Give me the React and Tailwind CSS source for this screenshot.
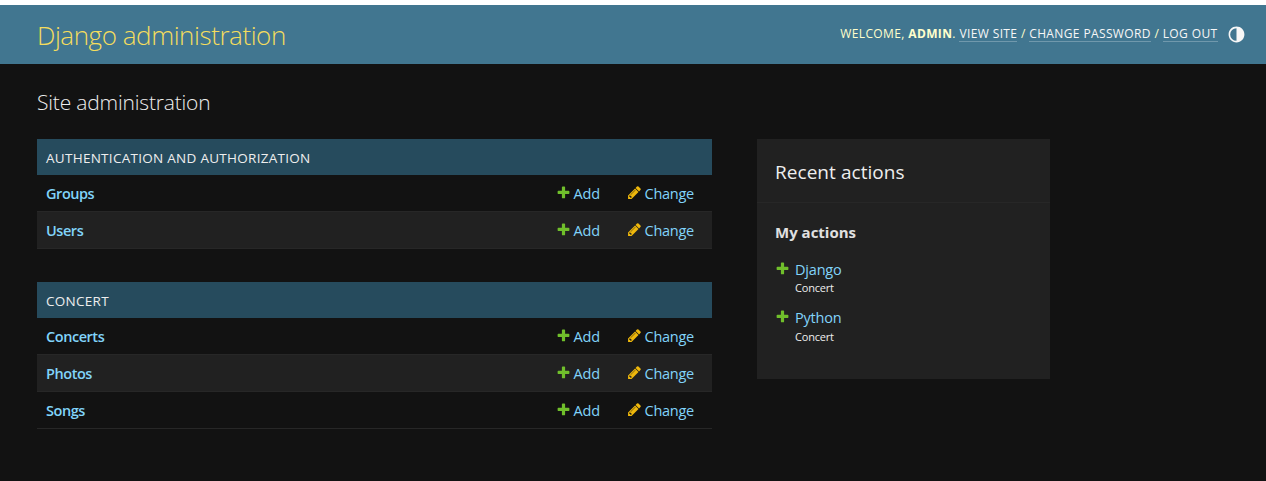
import React from "react";

function PlusIcon({ className }) {
  return (
    <svg viewBox="0 0 1792 1792" className={className} fill="#70bf2b">
      <path d="M1600 796v192q0 40-28 68t-68 28h-416v416q0 40-28 68t-68 28h-192q-40 0-68-28t-28-68v-416h-416q-40 0-68-28t-28-68v-192q0-40 28-68t68-28h416v-416q0-40 28-68t68-28h192q40 0 68 28t28 68v416h416q40 0 68 28t28 68z" />
    </svg>
  );
}

function PencilIcon({ className }) {
  return (
    <svg viewBox="0 0 1792 1792" className={className} fill="#efb80b">
      <path d="M491 1536l91-91-235-235-91 91v107h128v128h107zm523-928q0-22-22-22-10 0-17 7l-542 542q-7 7-7 17 0 22 22 22 10 0 17-7l542-542q7-7 7-17zm-54-192l416 416-832 832h-416v-416zm683 96q0 53-37 90l-166 166-416-416 166-165q36-38 90-38 53 0 91 38l235 234q37 39 37 91z" />
    </svg>
  );
}

function ThemeIcon({ className }) {
  return (
    <svg viewBox="0 0 24 24" className={className} fill="#f7f7f7">
      <path d="M12 22C6.477 22 2 17.523 2 12S6.477 2 12 2s10 4.477 10 10-4.477 10-10 10zm0-2V4a8 8 0 1 0 0 16z" />
    </svg>
  );
}

const userLink = "border-b border-white/25 text-[#f7f7f7] leading-[15px]";

function Header() {
  return (
    <header className="flex h-[59px] items-center justify-between bg-[#417690] pl-[37px] pr-[20.5px]">
      <h1 className="text-[26px] font-light leading-[32px] tracking-[-0.44px] text-[#f5dd5d]">
        Django administration
      </h1>
      <div className="mb-px flex items-center">
        <div className="flex items-baseline text-[12px] uppercase leading-[15px] tracking-[0.38px] text-[#ffffcc]">
          <span className="whitespace-pre">
            Welcome, <strong className="font-bold">admin</strong>.{" "}
          </span>
          <a className={userLink}>View site</a>
          <span className="whitespace-pre"> / </span>
          <a className={userLink}>Change password</a>
          <span className="whitespace-pre"> / </span>
          <a className={userLink}>Log out</a>
        </div>
        <ThemeIcon className="ml-[9px] size-[19px]" />
      </div>
    </header>
  );
}

function ModelRow({ name, striped }) {
  return (
    <div
      className={
        "flex h-[37px] items-center border-b border-[#272727] pl-[9px] text-[14.5px] leading-[20px] text-[#81d4fa] " +
        (striped ? "bg-[#212121]" : "bg-[#121212]")
      }
    >
      <a className="flex-1 pt-[2px] font-semibold tracking-[-0.45px]">{name}</a>
      <a className="flex w-[71px] items-center tracking-[-0.1px]">
        <PlusIcon className="mr-[2.5px] mb-px size-[15px]" />
        <span className="pt-[2px]">Add</span>
      </a>
      <a className="flex w-[85px] items-center tracking-[-0.25px]">
        <PencilIcon className="mr-[2.5px] mb-px size-[15px]" />
        <span className="pt-[2px]">Change</span>
      </a>
    </div>
  );
}

function Module({ title, models }) {
  return (
    <section>
      <h2 className="flex h-9 items-center bg-[#264b5d] pl-[9px] pt-[2px] text-[13.5px] uppercase tracking-[0.28px] text-[#eeeeee]">
        {title}
      </h2>
      {models.map((name, i) => (
        <ModelRow key={name} name={name} striped={i % 2 === 1} />
      ))}
    </section>
  );
}

function RecentAction({ name }) {
  return (
    <li className="flex h-[48.4px]">
      <PlusIcon className="mt-px mr-[5px] size-[15px]" />
      <div>
        <a className="block text-[14.5px] leading-[20.3px] tracking-[-0.2px] text-[#81d4fa]">{name}</a>
        <span className="block text-[11px] leading-[16px] tracking-[-0.2px] text-[#eeeeee]">Concert</span>
      </div>
    </li>
  );
}

function RecentActions() {
  return (
    <aside className="h-[240px] w-[293px] bg-[#212121] text-[#eeeeee]">
      <h2 className="h-16 border-b border-[#272727] px-[18px] pt-[20px] text-[19px] leading-[26px] tracking-[0.05px]">
        Recent actions
      </h2>
      <h3 className="px-[18px] pt-[18px] text-[15px] font-bold leading-[22px] text-[#e0e0e0]">My actions</h3>
      <ul className="px-[18px] pt-[17px]">
        <RecentAction name="Django" />
        <RecentAction name="Python" />
      </ul>
    </aside>
  );
}

export default function App() {
  return (
    <div className="h-[481px] overflow-hidden bg-[#121212] font-['Open_Sans','Noto_Sans',sans-serif]">
      <div className="h-[5px] bg-white" />
      <Header />
      <main className="px-[37px] pt-[24px]">
        <h1 className="text-[21px] font-light leading-[28px] tracking-[-0.18px] text-[#eeeeee]">Site administration</h1>
        <div className="mt-[23px] flex items-start gap-[45px]">
          <div className="flex w-[675px] flex-col gap-[33px]">
            <Module title="Authentication and Authorization" models={["Groups", "Users"]} />
            <Module title="Concert" models={["Concerts", "Photos", "Songs"]} />
          </div>
          <RecentActions />
        </div>
      </main>
    </div>
  );
}
